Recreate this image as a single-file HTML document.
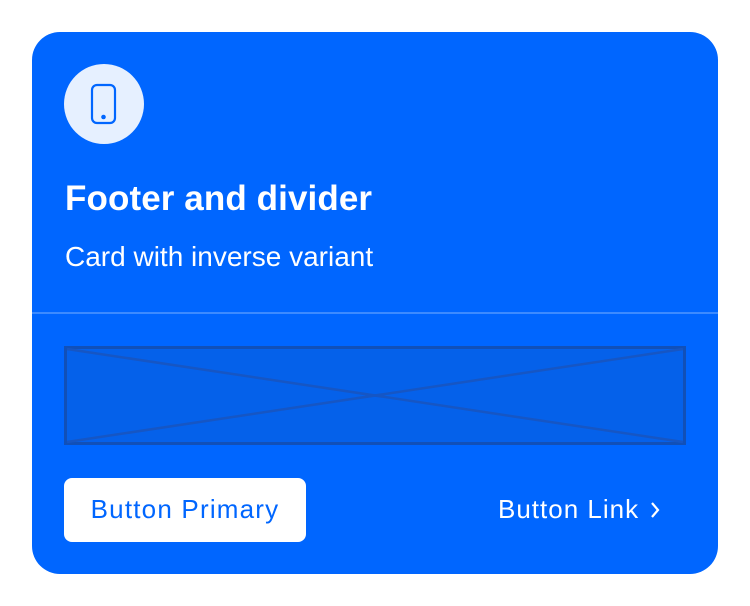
<!DOCTYPE html>
<html><head><style>
body{margin:0;width:750px;height:606px;background:#fff;font-family:"Liberation Sans",sans-serif;position:relative;overflow:hidden}
.card{position:absolute;left:32px;top:32px;width:686px;height:542px;background:#0066ff;border-radius:28px}
.ic{position:absolute;left:64px;top:64px;width:80px;height:80px;border-radius:50%;background:#e6f0ff}
.t{position:absolute;left:65px;top:181px;line-height:1;color:#fff;font-size:35px;font-weight:bold;letter-spacing:0.1px;white-space:nowrap}
.s{position:absolute;left:65px;top:243px;line-height:1;color:#fff;font-size:28px;white-space:nowrap}
.div{position:absolute;left:32px;top:312px;width:686px;height:2px;background:#3d8bff}
.ph{position:absolute;left:64px;top:346px;width:622px;height:99px;box-sizing:border-box;border:3px solid #1150b8;background:#0561ea}
.btn{position:absolute;left:64px;top:478px;width:242px;height:64px;background:#fff;border-radius:8px;color:#0066ff;font-size:26px;letter-spacing:1.2px;line-height:63px;text-align:center;white-space:nowrap}
.lk{position:absolute;left:498px;top:478px;line-height:63px;color:#fff;font-size:26px;letter-spacing:1px;white-space:nowrap}
</style></head><body>
<div class="card"></div>
<div class="ic"></div>
<svg style="position:absolute;left:0;top:0" width="750" height="606">
<rect x="92" y="85" width="23" height="38" rx="5" fill="none" stroke="#0066ff" stroke-width="2.2"/>
<circle cx="103.5" cy="117" r="2.3" fill="#0066ff"/>
</svg>
<div class="t">Footer and divider</div>
<div class="s">Card with inverse variant</div>
<div class="div"></div>
<div class="ph"></div>
<svg style="position:absolute;left:0;top:0" width="750" height="606">
<line x1="67" y1="349" x2="683" y2="442" stroke="#1656c4" stroke-width="2.5"/>
<line x1="683" y1="349" x2="67" y2="442" stroke="#1656c4" stroke-width="2.5"/>
<path d="M652 503 L658 510 L652 517" fill="none" stroke="#fff" stroke-width="2.2"/>
</svg>
<div class="btn">Button Primary</div>
<div class="lk">Button Link</div>
</body></html>
